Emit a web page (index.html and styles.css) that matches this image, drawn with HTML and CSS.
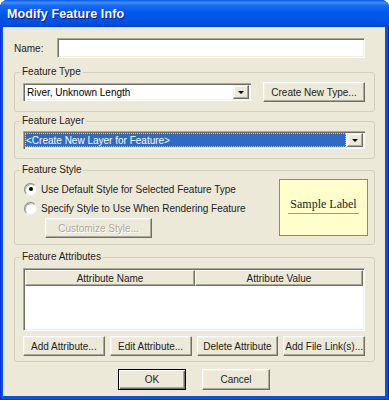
FILE: index.html
```html
<!DOCTYPE html>
<html lang="en">
<head>
    <meta charset="UTF-8">
    <title>Modify Feature Info</title>
    <link rel="stylesheet" href="styles.css">
</head>
<body>
    <div class="window">
        <div class="titlebar"><span class="title">Modify Feature Info</span></div>
        <div class="client">
            <div class="name-row">
                <label class="name-label">Name:</label>
                <div class="field name-field"></div>
            </div>

            <fieldset class="group group-type">
                <legend>Feature Type</legend>
                <div class="type-row">
                    <div class="combo combo-type">
                        <span class="combo-text">River, Unknown Length</span>
                        <span class="drop"><span class="arrow"></span></span>
                    </div>
                    <button class="btn btn-type">Create New Type...</button>
                </div>
            </fieldset>

            <fieldset class="group group-layer">
                <legend>Feature Layer</legend>
                <div class="combo combo-layer">
                    <span class="combo-text selected">&lt;Create New Layer for Feature&gt;</span>
                    <span class="drop"><span class="arrow"></span></span>
                </div>
            </fieldset>

            <fieldset class="group group-style">
                <legend>Feature Style</legend>
                <div class="style-row">
                    <div class="style-options">
                        <div class="radio-row"><span class="radio checked"></span>Use Default Style for Selected Feature Type</div>
                        <div class="radio-row"><span class="radio"></span>Specify Style to Use When Rendering Feature</div>
                        <button class="btn btn-custom" disabled>Customize Style...</button>
                    </div>
                    <div class="sample"><span class="sample-text">Sample Label</span></div>
                </div>
            </fieldset>

            <fieldset class="group group-attr">
                <legend>Feature Attributes</legend>
                <div class="listview">
                    <div class="lv-head">
                        <div class="lv-col">Attribute Name</div>
                        <div class="lv-col">Attribute Value</div>
                    </div>
                </div>
                <div class="attr-buttons">
                    <button class="btn">Add Attribute...</button>
                    <button class="btn">Edit Attribute...</button>
                    <button class="btn">Delete Attribute</button>
                    <button class="btn">Add File Link(s)...</button>
                </div>
            </fieldset>

            <div class="footer">
                <button class="btn btn-main btn-default">OK</button>
                <button class="btn btn-main">Cancel</button>
            </div>
        </div>
    </div>
</body>
</html>
```

FILE: styles.css
```css
html, body { margin: 0; background: #fff; }
body { font-family: "Liberation Sans", Arial, sans-serif; font-size: 10px; color: #000; }

.window { width: 389px; height: 400px; display: flex; flex-direction: column; background: #0055e5; border-radius: 8px 8px 0 0; box-shadow: inset 1px 0 #0831d9, inset -1px 0 #001ea0, inset 0 -1px #001ea0; box-sizing: border-box; padding: 0 4px 4px 3px; }
.titlebar { height: 27px; margin: 0 -4px 0 -3px; border-radius: 8px 8px 0 0; background: linear-gradient(to bottom, #0a5ae6 0%, #3d8ef9 10%, #1a6cf4 20%, #0058ee 45%, #0054e6 75%, #004bd8 92%, #0042c6 100%); display: flex; align-items: center; padding-left: 7px; }
.title { font-weight: bold; font-size: 12.5px; color: #fff; text-shadow: 1px 1px #0a1a8a; padding-top: 1px; letter-spacing: 0.1px; }

.client { flex: 1; background: #ece9d8; padding-top: 11px; display: flex; flex-direction: column; }

.field { background: #fff; border: 1px solid; border-color: #aca899 #fff #fff #aca899; box-shadow: inset 1px 1px #716f64, inset -1px -1px #f1efe2; box-sizing: border-box; }

.name-row { display: flex; align-items: center; height: 20px; margin: 0 10px 0 11px; }
.name-label { width: 43px; color: #222; }
.name-field { flex: 1; height: 20px; margin-right: 10px; }

.group { margin: 0 10px 0 11px; border: 1px solid #d0d0bf; border-radius: 3px; padding: 0 9px 0 8px; min-width: 0; }
.group legend { padding: 0 2px; margin-left: -3px; line-height: 12px; color: #222; }
.group-type { margin-top: 8px; padding-top: 4px; padding-bottom: 9px; }
.group-layer { margin-top: 3px; padding-top: 4px; padding-bottom: 9px; }
.group-style { margin-top: 5px; padding-top: 3px; padding-bottom: 6px; padding-right: 6px; }
.group-attr { margin-top: 6px; padding-top: 5px; padding-bottom: 5px; }

.type-row { display: flex; align-items: center; justify-content: space-between; height: 20px; }

.combo { display: flex; align-items: stretch; height: 18px; padding: 2px; background: #fff; border: 0; box-shadow: inset 1px 1px #aca899, inset 2px 2px #716f64, inset -1px -1px #fff, inset -2px -2px #f1efe2; box-sizing: border-box; }
.combo-type { width: 228px; }
.combo-layer { width: 342px; }
.combo-text { flex: 1; display: flex; align-items: center; padding-left: 2px; white-space: nowrap; }
.combo-text.selected { background: #316ac5; color: #fff; margin-right: 1px; padding-left: 1px; outline: 1px dotted #d8c890; outline-offset: -1px; }
.drop { width: 14px; background: #ece9d8; border: 1px solid; border-color: #f1efe2 #716f64 #716f64 #f1efe2; box-shadow: inset -1px -1px #aca899, inset 1px 1px #fff; display: flex; align-items: center; justify-content: center; }
.arrow { width: 0; height: 0; border-left: 3px solid transparent; border-right: 3px solid transparent; border-top: 3px solid #000; margin-top: 1px; }

.btn { font-family: "Liberation Sans", Arial, sans-serif; font-size: 10px; color: #222; background: #ece9d8; border: 1px solid; border-color: #fff #716f64 #716f64 #fff; box-shadow: inset -1px -1px #aca899, inset 1px 1px #f1efe2; padding: 0; height: 20px; box-sizing: border-box; white-space: nowrap; }
.btn-type { width: 102px; height: 20px; }
.btn-custom { width: 107px; margin: 3px 0 0 22px; color: #aca899; text-shadow: 1px 1px #fff; }

.style-row { display: flex; justify-content: space-between; align-items: flex-start; }
.style-options { display: flex; flex-direction: column; align-items: flex-start; padding-top: 3px; }
.radio-row { display: flex; align-items: center; height: 14px; margin-bottom: 5px; color: #222; white-space: nowrap; }
.radio-row:nth-child(2) { margin-bottom: 0; }
.radio { width: 11px; height: 11px; border-radius: 50%; background: #fff; border: 1px solid; border-color: #8a877a #f1efe2 #f1efe2 #8a877a; box-shadow: inset 1px 1px #c0bdb0; margin: 0 4px 0 1px; display: flex; align-items: center; justify-content: center; }
.radio.checked::after { content: ""; width: 4px; height: 4px; border-radius: 50%; background: #000; }

.sample { width: 89px; height: 57px; box-sizing: border-box; background: #ffffcc; border: 1px solid #8a877a; }
.sample-text { display: block; width: 71px; margin: 17px auto 0; line-height: 14px; padding-bottom: 2px; border-bottom: 1px solid #8c8ce6; text-align: center; font-family: "Liberation Serif", "Times New Roman", serif; font-size: 12px; color: #222; }

.listview { height: 63px; background: #fff; border: 1px solid; border-color: #aca899 #fff #fff #aca899; box-shadow: inset 1px 1px #716f64, inset -1px -1px #f1efe2; padding: 1px; box-sizing: border-box; }
.lv-head { display: grid; grid-template-columns: 170px 1fr; height: 16px; }
.lv-col { background: #ece9d8; border: 1px solid; border-color: #fff #716f64 #716f64 #fff; box-shadow: inset -1px -1px #aca899; display: flex; align-items: center; justify-content: center; color: #222; }

.attr-buttons { display: grid; grid-template-columns: repeat(4, 1fr); gap: 5px; margin-top: 5px; }

.footer { display: flex; justify-content: center; gap: 16px; margin-top: 7px; }
.btn-main { width: 68px; height: 21px; }
.btn-default { border-color: #000; box-shadow: inset 1px 1px #fff, inset -1px -1px #716f64, inset -2px -2px #aca899; }
```
